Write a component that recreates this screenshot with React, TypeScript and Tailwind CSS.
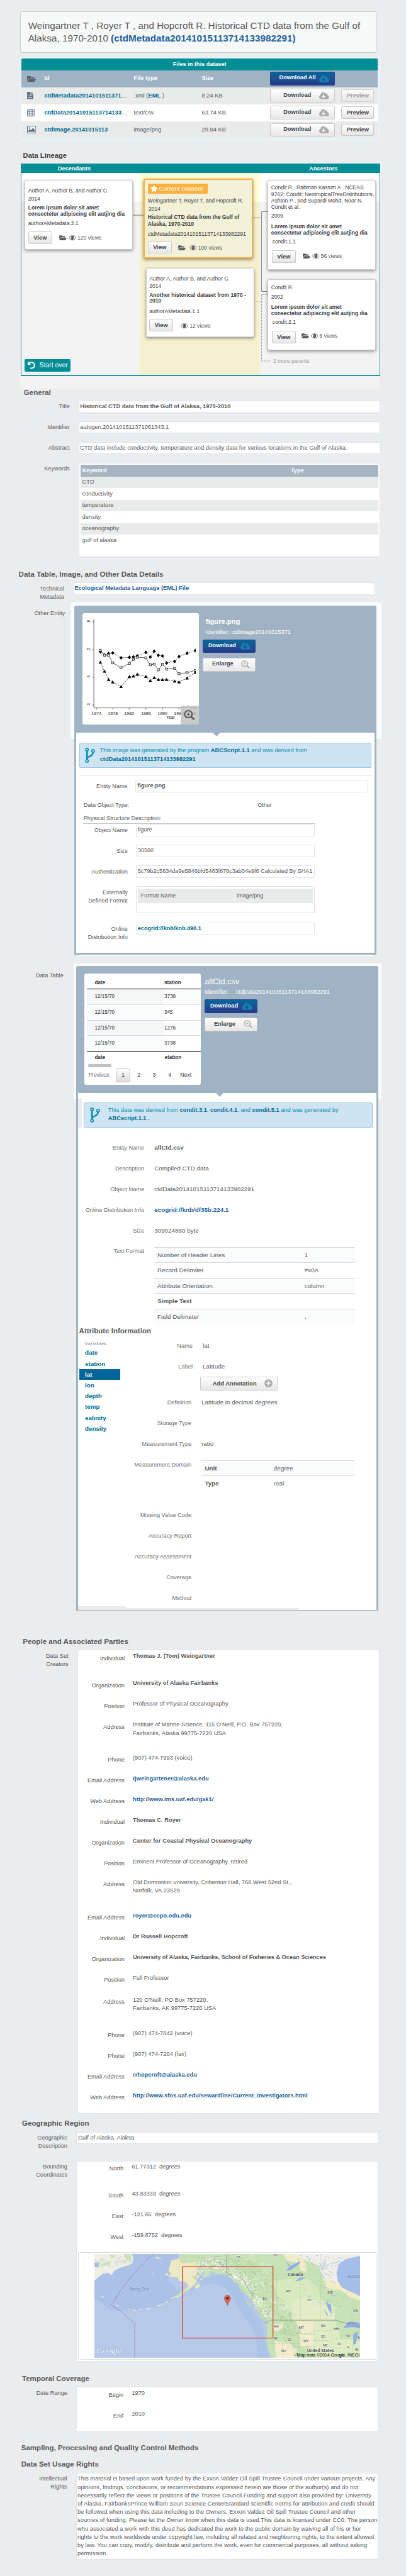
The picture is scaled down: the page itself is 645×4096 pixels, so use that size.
import type { ReactNode } from "react";
import { FaCloudDownloadAlt, FaFolderOpen, FaPlusCircle, FaStar } from "react-icons/fa";

/* ---------- icons ---------- */

function FileIcon() {
  return (
    <svg viewBox="0 0 20 22" className="h-[11.5px] w-[10px]" preserveAspectRatio="none">
      <path d="M0 0h11v8h9v14H0z M13 0l7 6h-7z" fill="#667385" />
      <path d="M4 12h12M4 16.5h12" stroke="#e9ebea" strokeWidth="2" />
    </svg>
  );
}

function GridIcon() {
  return (
    <svg viewBox="0 0 24 22" className="h-[11px] w-[12.4px]" preserveAspectRatio="none">
      <rect x="1.2" y="1.2" width="21.6" height="19.6" rx="1.5" fill="none" stroke="#6f7b8d" strokeWidth="2.2" />
      <path d="M1 7.5h22M1 14h22M8.5 1v20M15.8 1v20" stroke="#6f7b8d" strokeWidth="2" />
    </svg>
  );
}

function PictureIcon() {
  return (
    <svg viewBox="0 0 26 22" className="h-[12px] w-[14.4px]" preserveAspectRatio="none">
      <rect x="1" y="1" width="24" height="20" rx="1.5" fill="#f4f6f7" stroke="#667385" strokeWidth="2" />
      <circle cx="7" cy="6.5" r="2.2" fill="#667385" />
      <path d="M4 18v-5l4-3 3 3 6-7 5 6v6z" fill="#667385" />
    </svg>
  );
}

function EyeIcon() {
  return (
    <svg viewBox="0 0 24 16" className="h-[8.4px] w-[11.6px]" preserveAspectRatio="none">
      <path d="M1 8C5-1 19-1 23 8C19 17 5 17 1 8z" fill="none" stroke="#58595b" strokeWidth="1.7" />
      <ellipse cx="12" cy="7.6" rx="5" ry="6" fill="#58595b" />
      <path d="M8.6 8.2c0-2.6 1-4 2.6-4.6" fill="none" stroke="#eee" strokeWidth="1.2" />
    </svg>
  );
}

function ForkIcon() {
  return (
    <svg viewBox="0 0 16 24" className="h-[24px] w-[16px]" fill="none" stroke="#008cb4" preserveAspectRatio="none">
      <circle cx="3.2" cy="3" r="2.1" strokeWidth="1.6" />
      <circle cx="3.2" cy="20.9" r="2.1" strokeWidth="1.6" />
      <circle cx="12.8" cy="4.9" r="2.1" strokeWidth="1.6" />
      <path d="M3.2 5.2v13.4" strokeWidth="2.6" />
      <path d="M3.4 16.6c1-3.6 9.2-1.8 9.4-9.4" strokeWidth="2.4" />
    </svg>
  );
}

function ZoomIcon({ className, color }: { className: string; color: string }) {
  return (
    <svg viewBox="0 0 28 28" className={className} preserveAspectRatio="none" fill="none" stroke={color}>
      <circle cx="11.5" cy="11.5" r="9.6" strokeWidth="3.4" />
      <path d="M18.5 18.5l8 8" strokeWidth="4.6" />
      <path d="M11.5 7v9M7 11.5h9" strokeWidth="2" />
    </svg>
  );
}

function UndoIcon() {
  return (
    <svg viewBox="0 0 16 16" className="h-[13px] w-[13.5px]" fill="none">
      <path d="M4.2 4.2C9 .6 14.4 3.6 14.2 8.6C14 13.4 10 15 6 13.8" stroke="#fff" strokeWidth="2.5" />
      <path d="M1 .6v7h6.4z" fill="#fff" />
    </svg>
  );
}

/* ---------- shared pieces ---------- */

function Button({ children, className = "", disabled = false }: { children: ReactNode; className?: string; disabled?: boolean }) {
  return (
    <button
      className={`flex items-center rounded-[2px] border border-[#c9c9c9] bg-linear-to-b from-white to-[#e6e6e6] font-bold ${
        disabled ? "text-[#8a8a8a] opacity-80" : "text-[#444]"
      } ${className}`}
    >
      {children}
    </button>
  );
}

function BlueButton({ children, className = "" }: { children: ReactNode; className?: string }) {
  return (
    <button
      className={`flex items-center rounded-[2px] border border-[#26428f] bg-linear-to-b from-[#00679a] to-[#233a89] font-bold text-white ${className}`}
    >
      {children}
    </button>
  );
}

function Heading({ children, className = "" }: { children: ReactNode; className?: string }) {
  return <h2 className={`text-[11.55px] leading-[13px] font-bold text-[#58595b] ${className}`}>{children}</h2>;
}

function Link({ children }: { children: ReactNode }) {
  return <a className="font-bold text-[#1f5f9c]">{children}</a>;
}

function Field({
  label,
  labelClass,
  boxClass,
  rowClass = "h-[33px]",
  children,
}: {
  label: ReactNode;
  labelClass: string;
  boxClass: string;
  rowClass?: string;
  children: ReactNode;
}) {
  return (
    <div className={`flex items-start ${rowClass}`}>
      <div className={`shrink-0 pt-[3.2px] text-right leading-[13.2px] ${labelClass}`}>{label}</div>
      <div className={`shrink-0 rounded-[2px] border border-[#dfe3ed] bg-white ${boxClass}`}>{children}</div>
    </div>
  );
}

/* ---------- files table ---------- */

function FilesTable() {
  const rows = [
    { icon: <FileIcon />, id: "ctdMetadata2014101511371", cut: true, type: <>.xml (<b className="text-[#00698f]">EML</b> )</>, size: "8.24 KB", tone: "bg-[#e9ebea]", off: true },
    { icon: <GridIcon />, id: "ctdData20141015113714133", cut: true, type: <>text/csv</>, size: "63.74 KB", tone: "bg-white", off: false },
    { icon: <PictureIcon />, id: "ctdImage.20141015113", cut: false, type: <>image/png</>, size: "29.84 KB", tone: "bg-[#e9ebea]", off: false },
  ];
  return (
    <section className="ml-[32px] h-[134px] w-[571.5px] bg-[#e7f1fa] pt-[3px] pl-[2px]">
      <div className="w-[566.4px] overflow-hidden rounded-[2px]">
        <div className="h-[18.5px] bg-[#008e96] text-center text-[9.15px] leading-[18.5px] font-bold text-white">Files in this dataset</div>
        <div className="flex h-[27.1px] items-center bg-[#a0b3c4] font-bold text-white">
          <div className="w-[36.5px] pl-[8.8px]">
            <FaFolderOpen className="h-[13px] w-[14px] text-[#58646f]" />
          </div>
          <div className="w-[142px]">Id</div>
          <div className="w-[108px]">File type</div>
          <div className="w-[108.8px]">Size</div>
          <BlueButton className="h-[21.6px] w-[103.2px] pb-[2px] pl-[13.2px]">
            <span className="w-[63.6px] text-left">Download All</span>
            <FaCloudDownloadAlt className="mt-[2px] h-[12.6px] w-[15.6px] text-[#1581ab]" />
          </BlueButton>
        </div>
        {rows.map((r) => (
          <div key={r.id} className={`flex h-[27.1px] items-center ${r.tone}`}>
            <div className="w-[36.5px] pl-[8.8px]">{r.icon}</div>
            <div className="w-[142px] text-[9.38px] whitespace-nowrap">
              <b className="text-[#00698f]">{r.id}</b>
              {r.cut ? "…" : ""}
            </div>
            <div className="w-[108px] text-[9.38px]">{r.type}</div>
            <div className="w-[108.8px] text-[9.38px]">{r.size}</div>
            <Button className="h-[21.6px] w-[103.2px] pb-[2px] pl-[20px]">
              <span className="w-[56.8px] text-left">Download</span>
              <FaCloudDownloadAlt className="mt-[2px] h-[12.6px] w-[15.6px] text-[#a9a9a9]" />
            </Button>
            <Button className="ml-[10px] h-[19.6px] w-[51.8px] justify-center" disabled={r.off}>
              Preview
            </Button>
          </div>
        ))}
      </div>
    </section>
  );
}

/* ---------- lineage ---------- */

function Stats({ views, folder, className = "" }: { views: string; folder?: string; className?: string }) {
  return (
    <div className={`flex items-center text-[8.6px] text-[#58595b] ${className}`}>
      {folder && <FaFolderOpen className={`h-[10.4px] w-[12px] ${folder}`} />}
      <EyeIcon />
      <span className="ml-[2.2px]">{views}</span>
    </div>
  );
}

function CardFoot({ views, folder, className, statClass }: { views: string; folder?: string; className: string; statClass: string }) {
  return (
    <div className={`flex items-start ${className}`}>
      <Button className="h-[19.7px] w-[38.2px] justify-center text-[9.4px]">View</Button>
      <Stats views={views} folder={folder} className={statClass} />
    </div>
  );
}

const cardBase = "rounded-[3px] text-[8.57px] leading-[10.3px] text-[#3c3c3e] whitespace-nowrap";
const plainCard = "border border-[#c9cacc] bg-white shadow-[0_2px_5px_rgba(0,0,0,0.4)]";

function Lineage() {
  return (
    <section className="ml-[33px] h-[338.4px] w-[571px] border border-[#1d9aa3] border-b-2 bg-[#f3f3f3]">
      <div className="flex h-[14px] bg-[#008e96] leading-[14px] font-bold text-white">
        <div className="w-[168px] text-center">Decendants</div>
        <div className="w-[224px]" />
        <div className="w-[177px] pl-[65px]">Ancestors</div>
      </div>
      <div className="relative flex h-[321.4px] bg-[linear-gradient(to_bottom,#fff_45.5px,#f3f3f3_45.5px)]">
        <svg className="absolute top-0 left-0 h-[321px] w-[569px]" viewBox="34 275 569 321" fill="none">
          <rect x="221.7" y="275" width="190.9" height="321" fill="#fffcd9" />
          <rect x="221.7" y="320.3" width="190.9" height="276" fill="#f5f0ce" />
          <path d="M211 342.3h18" stroke="#a7a9ac" strokeWidth="2" />
          <path d="M401 346.5h14.5M425 336.5h-9.5v127h9.5" stroke="#8a8c8f" />
          <path d="M403 479.5h12" stroke="#cfcda8" strokeDasharray="2.5 1.5" />
          <path d="M425.5 468.5h-10v105.5h15" stroke="#939598" strokeDasharray="3 2" />
        </svg>

        <div className="relative w-[187.7px] pt-[11.2px] pl-[5.2px]">
          <div className={`h-[110.5px] w-[172px] pt-[10.4px] pl-[4.6px] ${cardBase} ${plainCard}`}>
            <p>Author A, Author B, and Author C.</p>
            <p className="mt-[2.9px]">2014</p>
            <p className="mt-[3.6px] font-bold">
              Lorem ipsum dolor sit amet
              <br />
              consectetur adipiscing elit autjing dia
            </p>
            <p className="mt-[4.7px]">authorAMetadata.2.1</p>
            <CardFoot className="mt-[8.1px]" views="120 views" folder="mr-[3px]" statClass="mt-[5px] ml-[11.2px]" />
          </div>
          <button className="mt-[174.4px] flex h-[19.8px] w-[72.6px] items-center rounded-[2px] bg-[#008e96] pl-[3.5px] text-[10.4px] text-white">
            <UndoIcon />
            <span className="ml-[6.4px]">Start over</span>
          </button>
        </div>

        <div className="relative w-[190.9px] pt-[8.9px] pl-[6.6px]">
          <div className={`h-[127.6px] w-[173.6px] border-[2.5px] border-[#fbb040] bg-[#f3f1d8] pt-[6.2px] pl-[4.5px] shadow-[0_2px_5px_rgba(0,0,0,0.45)] ${cardBase}`}>
            <div className="flex h-[15.7px] w-[95.4px] items-center rounded-[1px] bg-[#fbb040] pl-[4px] text-[9.9px] text-white">
              <FaStar className="h-[12px] w-[11.5px]" />
              <span className="ml-[2.4px]">Current Dataset</span>
            </div>
            <p className="mt-[6.1px]">Weingartner T, Royer T, and Hopcroft R.</p>
            <p className="mt-[2.9px] pl-[1px]">2014</p>
            <p className="mt-[3.1px] leading-[10.6px] font-bold">
              Historical CTD data from the Gulf of
              <br />
              Alaska, 1970-2010
            </p>
            <p className="mt-[5px]">ctdMetadata20141015113714133982291</p>
            <CardFoot className="mt-[6.7px]" views="100 views" folder="mr-[6px]" statClass="mt-[5px] ml-[10px]" />
          </div>
          <div className={`mt-[14.5px] ml-[3.3px] h-[110.3px] w-[172.3px] pt-[10.6px] pl-[4.6px] ${cardBase} ${plainCard}`}>
            <p>Author A, Author B, and Author C.</p>
            <p className="mt-[2.4px]">2014</p>
            <p className="mt-[4px] leading-[9.9px] font-bold">
              Another historical dataset from 1970 -
              <br />
              2010
            </p>
            <p className="mt-[5.9px]">authorAMetadata.1.1</p>
            <CardFoot className="mt-[6.7px]" views="12 views" statClass="mt-[6px] ml-[12px]" />
          </div>
        </div>

        <div className="relative w-[190px] pt-[10.7px] pl-[12.3px]">
          <div className={`h-[143.3px] w-[172px] pt-[6.6px] pl-[4.8px] ${cardBase} ${plainCard}`}>
            <p>
              Condit R , Rahman Kassim A , NCEAS
              <br />
              9762: Condit: NeotropicalTreeDistributions,
              <br />
              Ashton P , and Supardi Mohd. Noor N.
              <br />
              Condit et al.
            </p>
            <p className="mt-[4px]">2009</p>
            <p className="mt-[5.9px] font-bold">
              Lorem ipsum dolor sit amet
              <br />
              consectetur adipiscing elit autjing dia
            </p>
            <p className="mt-[4.2px] pl-[2px]">condit.1.1</p>
            <CardFoot className="mt-[8.3px] ml-[1.2px]" views="56 views" folder="mr-[3px]" statClass="mt-[4px] ml-[10.8px]" />
          </div>
          <div className={`mt-[15.4px] h-[113px] w-[172px] pt-[6.6px] pl-[4.8px] ${cardBase} ${plainCard}`}>
            <p>Condit R</p>
            <p className="mt-[4.3px]">2002</p>
            <p className="mt-[5.8px] leading-[10.1px] font-bold">
              Lorem ipsum dolor sit amet
              <br />
              consectetur adipiscing elit autjing dia
            </p>
            <p className="mt-[4.5px] pl-[2px]">condit.2.1</p>
            <CardFoot className="mt-[8.5px] ml-[1.2px]" views="6 views" folder="mr-[3px]" statClass="mt-[3px] ml-[8.7px]" />
          </div>
          <p className="mt-[11.2px] pl-[9.2px] text-[8.57px] leading-[11px] text-[#9a9a9c]">2 more parents</p>
        </div>
      </div>
    </section>
  );
}

/* ---------- general ---------- */

function General() {
  const keywords = ["CTD", "conductivity", "temperature", "density", "oceanography", "gulf of alaska"];
  const label = "w-[124.6px] pr-[13.9px]";
  return (
    <section className="h-[289px]">
      <Heading className="h-[19.4px] pl-[37.8px]">General</Heading>
      <Field label="Title" labelClass={label} boxClass="h-[19.3px] w-[479.7px] pl-[1.7px] text-[9.28px] leading-[17.3px]">
        <b>Historical CTD data from the Gulf of Alaksa, 1970-2010</b>
      </Field>
      <Field label="Identifier" labelClass={label} boxClass="h-[19.3px] w-[479.7px] pl-[1.7px] text-[9.28px] leading-[17.3px]">
        autogen.2014101511371061343.1
      </Field>
      <Field label="Abstract" labelClass={label} boxClass="h-[19.3px] w-[479.7px] pl-[1.7px] leading-[17.3px] tracking-[0.055px]">
        CTD data include conductivity, temperature and density data for various locations in the Gulf of Alaska.
      </Field>
      <Field label="Keywords" labelClass={label} rowClass="h-[149px]" boxClass="h-[148.8px] w-[479.7px] px-[2px] pt-[2.2px]">
        <div className="flex h-[18.5px] items-center bg-[#a8b3c4] pl-[3px] font-bold text-white">
          <span className="w-[331.3px]">Keyword</span>
          <span>Type</span>
        </div>
        {keywords.map((k) => (
          <div key={k} className="flex h-[18.5px] items-center pl-[3px] odd:bg-white even:bg-[#e9ebea]">
            {k}
          </div>
        ))}
      </Field>
    </section>
  );
}

/* ---------- entity panels ---------- */

const SERIES_X = [28.4, 35, 41.5, 48.1, 61.3, 74.5, 81, 87.2, 100.8, 107.8, 113.9, 120.5, 127.1, 133.7, 146.4, 153.4, 166.2, 179.4];
const DIAMONDS = [61.2, 66.5, 64, 63.2, 70.9, 70.2, 69.6, 68, 62.3, 69.8, 60.5, 66.9, 68, 79.2, 76.8, 69.1, 63.8, 59.6];
const SQUARES = [59, 66.7, 66.7, 79, 86.7, 79.7, 73.5, 70, 71.1, 82.1, 81, 90.2, 81.2, 88.9, 87.8, 96.2, 94.6, 90.9];
const TRIANGLES = [78.1, 92.4, 105.6, 109.6, 116.9, 101, 100.1, 97.3, 100.8, 107.2, 102.6, 105.6, 105.9, 105.6, 108.1, 109.6, 103.2, 94.4];

function line(ys: number[]) {
  return SERIES_X.map((x, i) => `${x},${ys[i]}`).join(" ");
}

function Chart() {
  const years: [number, string][] = [
    [22.2, "1974"],
    [48.2, "1978"],
    [74.2, "1982"],
    [100.8, "1986"],
    [127.1, "1990"],
    [153.2, "1994"],
    [179.4, "1998"],
  ];
  const levels: [number, string][] = [
    [13.7, ".6"],
    [58.1, ".5"],
    [101.7, ".4"],
    [146, ".3"],
  ];
  return (
    <svg viewBox="0 0 185 177.4" className="block h-[177.4px] w-[185px]" fill="none" stroke="#222" strokeWidth="0.7">
      <clipPath id="plot">
        <rect x="0" y="0" width="180" height="177" />
      </clipPath>
      <path d="M18.1 9v141.6h161.7" />
      {levels.map(([y, t]) => (
        <g key={t}>
          <path d={`M15.4 ${y}h2.7`} />
          <text transform={`translate(11.6 ${y + 2.6}) rotate(-90)`} fontSize="6.6" fill="#222" stroke="none">
            {t}
          </text>
        </g>
      ))}
      <g clipPath="url(#plot)">
        {years.map(([x, t]) => (
          <g key={t}>
            <path d={`M${x} 150.6v2.8`} />
            <text x={x} y="161.8" textAnchor="middle" fontSize="7.1" fill="#222" stroke="none">
              {t}
            </text>
          </g>
        ))}
        <polyline points={line(DIAMONDS)} strokeDasharray="1.6 1" />
        <polyline points={line(SQUARES)} />
        <polyline points={line(TRIANGLES)} strokeDasharray="4 1.2" />
        {SERIES_X.map((x, i) => (
          <g key={x} stroke="none" fill="#000">
            <path d={`M${x} ${DIAMONDS[i] - 3}l2.6 3l-2.6 3l-2.6-3z`} />
            <rect x={x - 1.7} y={SQUARES[i] - 1.7} width="3.4" height="3.4" fill="#ddd" stroke="#222" strokeWidth="0.8" />
            <path d={`M${x} ${TRIANGLES[i] - 2.8}l2.8 5h-5.6z`} />
          </g>
        ))}
      </g>
      <text x="139.8" y="168.4" textAnchor="middle" fontSize="6.9" fill="#222" stroke="none">
        Year
      </text>
    </svg>
  );
}

function PanelActions() {
  return (
    <>
      <BlueButton className="h-[21.5px] w-[84px] pb-[2px] pl-[7.6px]">
        <span className="w-[51.4px] text-left">Download</span>
        <FaCloudDownloadAlt className="mt-[2px] h-[12.6px] w-[15.6px] text-[#1581ab]" />
      </BlueButton>
      <Button className="mt-[7.3px] h-[22px] w-[84px] rounded-[1px] pb-[2px] pl-[13.6px]">
        <span className="w-[46.6px] text-left">Enlarge</span>
        <ZoomIcon color="#b0b0b0" className="mt-[1px] h-[13px] w-[14px]" />
      </Button>
    </>
  );
}

function Notch({ className }: { className: string }) {
  return (
    <svg viewBox="0 0 12 6" className={`h-[6px] w-[12px] ${className}`}>
      <path d="M0 0h12L6 6z" fill="#a0b3c4" />
    </svg>
  );
}

function FigurePanel() {
  const inner = "h-[19.5px] w-[284.4px] pl-[1.8px] leading-[17.5px]";
  const label = "w-[94.9px] pr-[13.2px]";
  return (
    <div className="h-[560px] w-[494px] bg-[linear-gradient(to_bottom,#fafcfe_217.3px,transparent_217.3px)] pt-[4.7px] pl-[6px]">
      <div className="flex h-[555.2px] w-[479.3px] flex-col rounded-t-[3px] bg-[#a0b3c4] px-[2.8px] pb-[2.6px]">
        <div className="flex h-[202.7px] shrink-0 pt-[12.2px] pl-[9.6px]">
          <div className="relative h-[177.4px] w-[185px] rounded-[3px] bg-white">
            <Chart />
            <div className="absolute right-0 bottom-0 flex h-[29.7px] w-[28.8px] items-center justify-center rounded-br-[3px] bg-[#bdbdbd]/80">
              <ZoomIcon color="#5a5a5a" className="h-[16px] w-[17.6px]" />
            </div>
          </div>
          <div className="pl-[6.6px] text-white">
            <h3 className="mt-[7px] pl-[4.4px] text-[11.2px] leading-[13px] font-bold">figure.png</h3>
            <p className="mt-[4px] pl-[4.6px] leading-[13.2px]">Identifier: ctdImage20141015371</p>
            <div className="mt-[5px]">
              <PanelActions />
            </div>
          </div>
        </div>
        <div className="flex-1 bg-white">
          <Notch className="ml-[217px]" />
          <div className="mt-[10px] ml-[4.8px] flex h-[40px] w-[463.8px] rounded-[2px] border border-[#97c4e8] bg-[#cee4f2] pt-[6.8px] pl-[8.4px] text-[9.28px] text-[#0a8fb2]">
            <ForkIcon />
            <p className="-mt-[1.6px] ml-[7.4px] leading-[13.2px]">
              This image was generated by the program <b className="text-[#006a98]">ABCScript.1.1</b> and was derived from
              <br />
              <b className="text-[#006a98]">ctdData20141015113714133982291</b>
            </p>
          </div>
          <div className="mt-[12px] ml-[6px] w-[464.8px] border-t border-[#dde2ea]" />
          <div className="mt-[6.2px] text-[9.1px]">
            <Field label="Entity Name" labelClass="w-[94.3px] pr-[12.8px]" rowClass="h-[34px]" boxClass="h-[19.5px] w-[369.6px] pl-[1.8px] leading-[17.5px]">
              <b>figure.png</b>
            </Field>
          </div>
          <div className="flex h-[20.6px] pl-[11.7px] text-[9.08px] leading-[13.2px]">
            <span className="w-[276.4px]">Data Object Type:</span>
            <span>Other</span>
          </div>
          <div className="ml-[11.2px] h-[14.6px] w-[369px] border-b border-[#c4c6c9] pl-[0.5px] text-[9.08px] leading-[13.2px]">
            Physical Structure Description:
          </div>
          <div className="mt-[0.8px] text-[9.08px]">
            <Field label="Object Name" labelClass={label} boxClass={inner}>figure</Field>
            <Field label="Size" labelClass={label} boxClass={inner}>30560</Field>
            <Field label="Authentication" labelClass={label} boxClass={inner}>
              <span className="whitespace-nowrap">5c79b2c5634da9e5846bfd5483f878c3ab04e9f6 Calculated By SHA1</span>
            </Field>
            <Field label={<>Externally<br />Defined Format</>} labelClass={label} rowClass="h-[58px]" boxClass="h-[43px] w-[284.4px] px-[2px] pt-[2.2px]">
              <div className="flex h-[23.8px] items-center bg-[#e9ebea] pl-[4.8px]">
                <span className="w-[152.2px]">Format Name</span>
                <span>image/png</span>
              </div>
            </Field>
            <Field label={<>Online<br />Distribution Info</>} labelClass={label} boxClass={inner}>
              <b className="text-[#00698f]">ecogrid://knb/knb.490.1</b>
            </Field>
          </div>
        </div>
      </div>
      <div className="ml-[8.6px] h-[1.8px] w-[465px] bg-white" />
    </div>
  );
}

function DataPreview() {
  const rows: [string, string][] = [
    ["12/15/70", "3738"],
    ["12/15/70", "345"],
    ["12/15/70", "1276"],
    ["12/15/70", "3738"],
  ];
  return (
    <div className="h-[177.2px] w-[185.4px] overflow-hidden rounded-[3px] bg-white pl-[4px] text-[8.15px] text-[#2f2f31]">
      <div className="flex h-[25.2px] items-end border-b border-black pb-[5.4px] pl-[12.8px] leading-[9px] font-bold">
        <span className="w-[110.7px]">date</span>
        <span>station</span>
      </div>
      {rows.map(([d, s], i) => (
        <div
          key={i}
          className={`flex items-center pl-[12.8px] ${i < 3 ? "h-[24.7px] border-b border-[#dcdcdc]" : "h-[24.3px] border-b-[1.5px] border-black"} ${
            i % 2 === 0 ? "bg-[linear-gradient(to_right,#f5f6f6_123px,#fbfcfc_123px)]" : "bg-[linear-gradient(to_right,#fbfcfc_123px,#fff_123px)]"
          }`}
        >
          <span className="w-[110.5px]">{d}</span>
          <span>{s}</span>
        </div>
      ))}
      <div className="flex h-[19px] items-center pl-[12.8px] font-bold">
        <span className="w-[111.2px]">date</span>
        <span>station</span>
      </div>
      <div className="mt-px ml-[2px] h-[5.5px] w-[37.5px] rounded-[2px] bg-[#c1c1c1]" />
      <div className="mt-[2px] flex h-[21.6px] items-center text-[8.6px]">
        <span className="w-[46.8px] pl-[2.8px] text-[#666]">Previous</span>
        <span className="flex h-[21.6px] w-[22.4px] items-center justify-center border border-[#c4c4c4] bg-linear-to-b from-white to-[#dcdcdc]">1</span>
        <span className="w-[24.6px] pl-[11.4px]">2</span>
        <span className="w-[24.6px] pl-[11.2px]">3</span>
        <span className="w-[24.6px] pl-[11.4px]">4</span>
        <span className="pl-[5.8px]">Next</span>
      </div>
    </div>
  );
}

function Plain({ label, labelClass, rowClass = "h-[33px]", children }: { label: ReactNode; labelClass: string; rowClass?: string; children?: ReactNode }) {
  return (
    <div className={`flex items-start leading-[13.2px] ${rowClass}`}>
      <div className={`shrink-0 pt-[0.9px] text-right text-[#6d6e71] ${labelClass}`}>{label}</div>
      <div className="text-[9.85px]">{children}</div>
    </div>
  );
}

function AttributeInfo() {
  const vars = ["date", "station", "lat", "lon", "depth", "temp", "salinity", "density"];
  const label = "w-[112.2px] pr-[15.9px]";
  return (
    <>
      <h3 className="mt-[4.6px] pl-[1.4px] text-[11.5px] leading-[13px] font-bold text-[#58595b]">Attribute Information</h3>
      <div className="flex">
        <div className="w-[98px] shrink-0 pl-[1.4px]">
          <div className="mt-[7.6px] pl-[9.2px] font-['Open_Sans',sans-serif] text-[8px] leading-[12px] text-[#808285]">Variables</div>
          <ul className="mt-[0.4px]">
            {vars.map((v) => (
              <li
                key={v}
                className={`h-[17.2px] w-[65.4px] pl-[9.4px] text-[9.82px] leading-[17.2px] font-bold ${
                  v === "lat" ? "bg-[#006699] text-white" : "text-[#00698f]"
                }`}
              >
                {v}
              </li>
            ))}
          </ul>
        </div>
        <div className="pt-[10.2px]">
          <Plain label="Name" labelClass="w-[99.9px] pr-[16.1px]">lat</Plain>
          <Plain label="Label" labelClass="w-[99.9px] pr-[16.1px]" rowClass="h-[24px]">Latitude</Plain>
          <div className="-mt-[0.6px] h-[34px] pl-[96.2px]">
            <Button className="h-[21.6px] w-[123px] pb-[1px] pl-[18.4px] text-[9.4px]">
              <span className="w-[82px] text-left whitespace-nowrap">Add Annotation</span>
              <FaPlusCircle className="h-[13px] w-[13px] text-[#a9a9a9]" />
            </Button>
          </div>
          <div className="-ml-[14.3px]">
            <Plain label="Definition" labelClass={label}>Latitude in decimal degrees</Plain>
            <Plain label="Storage Type" labelClass={label} />
            <Plain label="Measurement Type" labelClass={label}>ratio</Plain>
            <Plain label="Measurement Domain" labelClass={label} rowClass="h-[79.8px]">
              <div className="w-[243px] border-t border-[#d9dadb]">
                <div className="flex h-[23.8px] items-center border-b border-[#d9dadb] bg-[#fafcfb] pl-[5.4px]">
                  <b className="w-[109.4px]">Unit</b>
                  <span>degree</span>
                </div>
                <div className="flex h-[23.8px] items-center pl-[5.4px]">
                  <b className="w-[109.4px]">Type</b>
                  <span>real</span>
                </div>
              </div>
            </Plain>
            <Plain label="Missing Value Code" labelClass={label} />
            <Plain label="Accuracy Report" labelClass={label} />
            <Plain label="Accuracy Assessment" labelClass={label} />
            <Plain label="Coverage" labelClass={label} />
            <Plain label="Method" labelClass={label} rowClass="h-[20px]" />
          </div>
        </div>
      </div>
    </>
  );
}

function TablePanel() {
  const label = "w-[121px] pr-[16.1px]";
  const format: [ReactNode, string][] = [
    ["Number of Header Lines", "1"],
    ["Record Delimiter", "#x0A"],
    ["Attribute Orientation", "column"],
    [<b key="b">Simple Text</b>, ""],
    ["Field Delimeter", ","],
  ];
  return (
    <div className="h-[1029.4px] w-[489px] bg-[linear-gradient(to_bottom,#fafcfe_216px,transparent_216px)] pt-[4px] pl-[4.6px]">
      <div className="flex h-[1025.4px] w-[479.3px] flex-col rounded-t-[3px] bg-[#a0b3c4] px-[2.8px] pb-[2.6px]">
        <div className="flex h-[202.6px] shrink-0 pt-[12.4px] pl-[9.4px]">
          <DataPreview />
          <div className="pl-[6.4px] text-white">
            <h3 className="mt-[7.4px] text-[12.6px] leading-[13px]">allCtd.csv</h3>
            <p className="mt-[2.8px] flex leading-[13.2px]">
              <span className="w-[49.4px]">Identifier:</span>
              <span>ctdData20141015113714133982291</span>
            </p>
            <div className="mt-[5px]">
              <PanelActions />
            </div>
          </div>
        </div>
        <div className="flex flex-1 flex-col bg-white">
          <Notch className="ml-[218.6px] shrink-0" />
          <div className="mt-[3px] h-[46.2px] w-[5.4px] shrink-0 bg-[#ebecee]" />
          <div className="-mt-[40.4px] ml-[9px] flex h-[40px] w-[458.4px] shrink-0 rounded-[2px] border border-[#97c4e8] bg-[#cee4f2] pt-[6.8px] pl-[8.4px] text-[9.28px] text-[#0a8fb2]">
            <ForkIcon />
            <p className="-mt-[1.6px] ml-[13.2px] leading-[13.2px] [&_b]:text-[#006a98]">
              This data was derived from <b>condit.3.1</b>, <b>condit.4.1</b>, and <b>condit.5.1</b> and was generated by
              <br />
              <b>ABCscript.1.1 .</b>
            </p>
          </div>
          <div className="mt-[24.9px]">
            <Plain label="Entity Name" labelClass={label}><b>allCtd.csv</b></Plain>
            <Plain label="Description" labelClass={label}>Compiled CTD data</Plain>
            <Plain label="Object Name" labelClass={label}>ctdData20141015113714133982291</Plain>
            <Plain label="Online Distribution Info" labelClass={label}><Link>ecogrid://knb/df35b.224.1</Link></Plain>
            <Plain label="Size" labelClass={label}>309024860 byte</Plain>
            <div className="flex">
              <div className={`text-right leading-[13.2px] text-[#6d6e71] ${label}`}>Text Format</div>
              <div className="w-[318.6px] text-[9.85px]">
                {format.map(([k, v], i) => (
                  <div key={i} className="flex h-[24.4px] items-center border-t border-[#d9dadb] pl-[4.9px] odd:bg-[#fafcfb]">
                    <span className="w-[233.7px]">{k}</span>
                    <span>{v}</span>
                  </div>
                ))}
              </div>
            </div>
          </div>
          <AttributeInfo />
          <div className="mt-auto flex h-[6.6px] items-end">
            <div className="h-full w-[76.5px] bg-[#ebecee]" />
            <div className="h-[3.6px] w-[276px] bg-[#ebecee]" />
          </div>
        </div>
      </div>
    </div>
  );
}

/* ---------- people ---------- */

function People() {
  const rows: [string, string, ReactNode][] = [
    ["h-[43px]", "Individual", <b>Thomas J. (Tom) Weingartner</b>],
    ["h-[33px]", "Organization", <b>University of Alaska Fairbanks</b>],
    ["h-[33px]", "Position", "Professor of Physical Oceanography"],
    ["h-[52.8px]", "Address", <>Institute of Marine Science, 115 O'Neill, P.O. Box 757220,<br />Fairbanks, Alaska 99775-7220 USA</>],
    ["h-[33px]", "Phone", "(907) 474-7993 (voice)"],
    ["h-[33px]", "Email Address", <Link>tjweingartener@alaska.edu</Link>],
    ["h-[33px]", "Web Address", <Link>http://www.ims.uaf.edu/gak1/</Link>],
    ["h-[33px]", "Individual", <b>Thomas C. Royer</b>],
    ["h-[33px]", "Organization", <b>Center for Coastal Physical Oceanography</b>],
    ["h-[33px]", "Position", "Eminent Professor of Oceanography, retired"],
    ["h-[53px]", "Address", <>Old Domninion university, Crittenton Hall, 768 West 52nd St.,<br />Norfolk, VA 23529</>],
    ["h-[33px]", "Email Address", <Link>royer@ccpo.odu.edu</Link>],
    ["h-[33px]", "Individual", <b>Dr Russell Hopcroft</b>],
    ["h-[33px]", "Organization", <b className="tracking-[-0.04px]">University of Alaska, Fairbanks, School of Fisheries &amp; Ocean Sciences</b>],
    ["h-[35px]", "Position", "Full Professor"],
    ["h-[52.8px]", "Address", <>120 O'Neill, PO Box 757220,<br />Fairbanks, AK 99775-7220 USA</>],
    ["h-[33px]", "Phone", "(907) 474-7842 (voice)"],
    ["h-[33px]", "Phone", "(907) 474-7204 (fax)"],
    ["h-[33px]", "Email Address", <Link>rrhopcroft@alaska.edu</Link>],
    ["h-[33px]", "Web Address", <Link>http://www.sfos.uaf.edu/sewardline/Current_investigators.html</Link>],
  ];
  return (
    <section className="h-[765.9px]">
      <Heading className="mb-[6.6px] pl-[36.2px]">People and Associated Parties</Heading>
      <Field label={<>Data Set<br />Creators</>} labelClass="w-[122.6px] pr-[14px]" rowClass="" boxClass="h-[738px] w-[480px] pt-[2.9px]">
        {rows.map(([h, label, value], i) => (
          <div key={i} className={`flex leading-[13.2px] ${h}`}>
            <div className="w-[74.4px] pt-[3.2px] text-right">{label}</div>
            <div className="pl-[13px] tracking-[0.05px]">{value}</div>
          </div>
        ))}
      </Field>
    </section>
  );
}

/* ---------- map ---------- */

/* Shapes share one survey grid, 1544 x 750 with its origin at (12, 12). */
const gx = (x: number) => (x - 12) * 0.27364;
const gy = (y: number) => (y - 12) * 0.22;

function scatter(seed: number, count: number, path: [number, number][], spread: number) {
  let s = seed;
  const rnd = () => {
    s = (s * 16807) % 2147483647;
    return s / 2147483647;
  };
  return Array.from({ length: count }, () => {
    const t = rnd() * (path.length - 1);
    const i = Math.floor(t);
    const f = t - i;
    const x = path[i][0] + (path[i + 1][0] - path[i][0]) * f + (rnd() - 0.5) * spread;
    const y = path[i][1] + (path[i + 1][1] - path[i][1]) * f + (rnd() - 0.5) * spread * 0.8;
    return `M${x.toFixed(1)} ${y.toFixed(1)}l${(3 + rnd() * 8).toFixed(1)} ${(-6 + rnd() * 14).toFixed(1)}`;
  }).join("");
}

const ROCKIES: [number, number][] = [[800, 60], [900, 130], [960, 220], [1000, 300], [1040, 370], [1100, 430], [1130, 520], [1180, 620]];
const COAST: [number, number][] = [[640, 110], [720, 90], [800, 130], [870, 190], [920, 260], [950, 340], [990, 420], [1030, 470]];
const RANGE: [number, number][] = [[600, 190], [620, 110], [660, 50], [720, 40], [780, 100]];
const SIBERIA: [number, number][] = [[20, 90], [60, 60], [110, 90], [160, 50], [220, 50]];

function LocationMap() {
  const labels: [number, number, string][] = [
    [847, 45, "YT"], [1069, 26, "NT"], [1137, 288, "AB"], [1381, 298, "MB"], [1260, 355, "SK"], [1002, 346, "BC"], [1529, 432, "ON"],
    [1067, 544, "WA"], [1213, 553, "MT"], [1341, 541, "ND"], [1418, 564, "MN"], [1060, 628, "OR"], [1146, 637, "ID"], [1340, 615, "SD"],
    [1486, 612, "WI"], [1550, 627, "M"], [1240, 649, "WY"], [1352, 681, "NE"], [1433, 669, "IA"], [1487, 693, "IL"], [1535, 711, "IN"],
    [1111, 721, "NV"], [1184, 750, "UT"], [1448, 752, "MO"],
  ];
  return (
    <svg viewBox="0 0 422.5 165" className="mx-auto block h-[165px] w-[422.5px]">
      <g transform="scale(0.27364 0.22) translate(-12 -12)">
        <rect x="12" y="12" width="1544" height="750" fill="#b6c9e9" />
        <path d="M12 12H500L440 200L520 300L480 340L300 420L110 420L12 330z" fill="#abc1e8" />
        <path d="M560 280L640 200L760 150L840 210L900 380L980 500L1005 640L1020 762H960L950 600L860 420L780 260L700 220z" fill="#acc3e8" />
        {/* Siberia */}
        <path d="M12 12H230L238 45L232 80L205 95L165 110L130 130L110 165L92 150L60 155L35 180L12 205z" fill="#efefe6" />
        <path d="M180 12H225L230 70L195 50zM100 15l40 8-30 25zM60 80l50-20-10 30-60 10z" fill="#cfe3b9" />
        <path d="M12 75L40 72L36 110L12 105z" fill="#a3bce8" />
        {/* Alaska and mainland */}
        <path d="M510 12L500 45L455 60L458 100L440 130L455 155L440 175L500 180L500 205L545 215L560 245L525 280L470 325L480 330L560 270L610 215L612 180L630 150L655 130L640 185L675 170L690 140L730 155L790 165L825 215L850 225L855 260L890 300L925 345L945 390L965 430L985 455L1010 480L1030 500L1010 510L1015 580L1010 640L1020 700L1040 762H1556V12z" fill="#c7e2b4" />
        <path d="M460 60L500 45L520 80L600 70L615 120L590 190L605 215L560 265L525 285L560 245L545 215L500 205L500 182L445 175L455 155L442 130z" fill="#eee8c3" />
        <path d="M595 250L615 222L628 245L600 265zM420 155l18-5 4 16-16 2z" fill="#eee8c3" />
        {/* prairies */}
        <path d="M1050 210L1130 190L1250 190L1300 250L1330 340L1420 400L1400 490L1240 500L1150 430L1080 340z" fill="#d8eabd" />
        <path d="M1160 360L1240 320L1320 360L1410 440V490H1160z" fill="#e2edc8" />
        <path d="M1190 500H1410L1440 620L1556 640V762H1240L1280 640z" fill="#ddecc2" />
        <path d="M1060 640L1150 660L1190 700L1170 762H1070L1060 700zM1055 520L1110 510L1100 560L1055 580zM1180 500H1290V560L1220 590zM1200 590L1290 600L1280 680L1210 680z" fill="#f3eccb" />
        <path d="M1110 12H1215L1240 90L1245 150L1210 130L1200 80L1130 60z" fill="#f1ecca" />
        {/* tundra and Hudson Bay */}
        <path d="M1180 12H1556V340L1500 310L1460 265L1400 270L1340 200L1320 100L1240 60z" fill="#efefe7" />
        <path d="M1340 180L1420 215L1480 255L1556 320V350L1490 320L1440 270L1360 260z" fill="#f3ecc8" />
        <path d="M1556 25L1470 50L1430 85L1420 150L1425 210L1450 255L1556 318z" fill="#a5bde9" />
        {/* lakes */}
        <path d="M1120 60L1150 100L1210 60L1200 85L1150 130L1120 130L1145 108zM1175 210L1210 180L1240 185L1200 205zM1355 360L1385 380L1390 450L1370 410zM1340 400L1370 455L1362 458zM1455 550L1490 500L1540 505L1556 520V545L1500 540zM1515 590L1545 570L1530 660L1515 668zM1165 670l12 12-6 12z" fill="#8faee4" />
        <path d={scatter(77, 110, [[1240, 40], [1330, 130], [1380, 60], [1310, 230], [1300, 330], [1440, 400], [1500, 470]], 170)} stroke="#9db8e8" strokeWidth="3.5" fill="none" />
        <path d={scatter(19, 60, [[1260, 30], [1380, 60], [1400, 170]], 150)} stroke="#9db8e8" strokeWidth="4" fill="none" />
        {/* relief */}
        <path d={scatter(5, 420, ROCKIES, 130)} stroke="#8fae8a" strokeWidth="2.4" fill="none" opacity="0.75" />
        <path d={scatter(6, 240, [[560, 40], [700, 80], [900, 60], [1000, 150]], 150)} stroke="#9bb394" strokeWidth="2" fill="none" opacity="0.7" />
        <path d={scatter(9, 250, COAST, 60)} stroke="#fbfbf8" strokeWidth="5" fill="none" />
        <path d={scatter(10, 150, COAST, 62)} stroke="#8d948c" strokeWidth="2" fill="none" opacity="0.8" />
        <path d={scatter(12, 110, RANGE, 45)} stroke="#f6f5ee" strokeWidth="5" fill="none" />
        <path d={scatter(13, 100, RANGE, 48)} stroke="#90958e" strokeWidth="2" fill="none" />
        <path d={scatter(14, 80, [[900, 30], [980, 60], [1010, 130], [940, 190], [1000, 250]], 70)} stroke="#f1f0e8" strokeWidth="4" fill="none" />
        <path d={scatter(16, 60, [[1060, 350], [1110, 410], [1100, 440]], 60)} stroke="#f1f0e8" strokeWidth="4" fill="none" />
        <path d={scatter(17, 110, SIBERIA, 75)} stroke="#bfc3b8" strokeWidth="2.4" fill="none" />
        <path d={scatter(21, 100, [[1080, 560], [1150, 600], [1220, 690], [1100, 700]], 100)} stroke="#a9bd95" strokeWidth="2.2" fill="none" opacity="0.8" />
        {/* islands */}
        <path d="M843 225L860 240L885 280L880 300L855 262zM888 345L905 355L918 405L905 385zM955 445L985 455L1020 505L1000 500z" fill="#c2dfb2" stroke="#9fc59a" />
        <path d="M360 30L395 40L400 50L375 45z" fill="#eee8c3" />
        <path d="M205 410l15 3M235 415l20 8M270 415l25-6M310 408l30-4M375 385l20-3M400 378l12-8M425 365l14-8M455 335l22-10M485 325l18-8M505 312l25-16M55 315l12 12M140 380l14 10M345 150l8 3" stroke="#f0eed8" strokeWidth="6" />
        <path d="M810 165L825 200L850 195L845 175z" fill="#fff" />
        {/* borders */}
        <g fill="none" stroke="#74786f" strokeWidth="2.6">
          <path d="M780 12V155L805 160L830 200L855 172L880 205L905 265L935 300L925 335" />
          <path d="M1028 490H1410L1435 500L1480 515L1510 508L1556 550M1005 505L1022 507" />
        </g>
        <g fill="none" stroke="#b3c293" strokeWidth="2.2" strokeDasharray="14 8">
          <path d="M885 163H1418M1070 163V310L1150 430V490M1208 163V490M1325 163V490M1410 490V380L1490 270L1440 230" />
          <path d="M1010 660H1200M1287 500V640M1287 565H1390M1287 637H1380L1410 665M1390 490L1395 625H1460M1220 590H1287M1195 590V680H1290V730M1105 660V762M1410 690H1465M1470 620V690M1510 660V762M1055 570H1110L1150 600" />
        </g>
        <path d="M352 12L300 75L240 155L170 265L110 380L180 440L246 516V762" fill="none" stroke="#94508a" strokeWidth="3" strokeDasharray="10 6" />
        <rect x="523.5" y="103" width="525" height="517" fill="none" stroke="#d94f32" strokeWidth="5.5" />
      </g>
      <path d="M211.3 81.8c-.4-4.4-4.9-7-4.9-11.2a4.9 5 0 0 1 9.8 0c0 4.2-4.5 6.8-4.9 11.2z" fill="#e2664d" stroke="#9c3a2a" strokeWidth="0.6" />
      <circle cx="211.3" cy="70.2" r="2" fill="#4a1611" />
      <g fontFamily="Roboto, sans-serif" fontSize="5.7" textAnchor="middle" fill="#333" stroke="#fff" strokeWidth="1.1" strokeOpacity="0.75" paintOrder="stroke">
        {labels.map(([x, y, t]) => (
          <text key={t} x={gx(x)} y={gy(y)}>
            {t}
          </text>
        ))}
        <g fontWeight="500" fontSize="7.1">
          <text x={gx(1179)} y={gy(169)}>Canada</text>
          <text x={gx(1325)} y={gy(721)}>United States</text>
        </g>
        <g fontStyle="italic" fontSize="6.5" fill="#5374ad" strokeOpacity="0.3">
          <text x={gx(270)} y={gy(276)}>Bering Sea</text>
          <text x={gx(1482)} y={gy(184)} textAnchor="start">Hudson</text>
        </g>
      </g>
      <text x={gx(27)} y={gy(729)} fontFamily="'Liberation Serif', serif" fontSize="13" fill="#fff" stroke="#8ba4cf" strokeWidth="0.8" paintOrder="stroke">
        Google
      </text>
      <text x={gx(1551)} y={gy(754)} textAnchor="end" fontSize="7" fill="#000">
        Map data ©2014 Google, INEGI
      </text>
    </svg>
  );
}

/* ---------- geography, time, rights ---------- */

function Pair({ label, children, className }: { label: string; children: ReactNode; className: string }) {
  return (
    <div className={`flex leading-[13.2px] ${className}`}>
      <div className="w-[73.9px] pt-[3.3px] text-right">{label}</div>
      <div className="pl-[13.2px] whitespace-pre">{children}</div>
    </div>
  );
}

export default function App() {
  return (
    <main className="h-[4096px] w-[645px] overflow-hidden bg-[#ebecee] font-['Liberation_Sans',Arial,sans-serif] text-[9.24px] leading-[13.2px] text-[#58595b]">
      <header className="h-[90px] pt-[18px] pl-[32px]">
        <h1 className="h-[65.6px] w-[566px] rounded-[3px] border border-[#cbcccd] bg-[#f7f9f9] pt-[12.2px] pl-[11.7px] text-[15.25px] leading-[19.8px] whitespace-nowrap">
          Weingartner T , Royer T , and Hopcroft R. Historical CTD data from the Gulf of
          <br />
          Alaksa, 1970-2010 <b className="text-[#1f5f9c]">(ctdMetadata20141015113714133982291)</b>
        </h1>
      </header>

      <FilesTable />
      <h2 className="h-[36px] pt-[17px] pl-[36.6px] text-[11.15px] leading-[13px] font-bold text-[#3f4042]">Data Lineage</h2>
      <Lineage />
      <div className="ml-[32px] h-[19.2px] w-[571px] bg-[#f3f3f3]" />

      <General />

      <section className="h-[1697.3px]">
        <Heading className="mb-[6.8px] pl-[29.6px] tracking-[0.06px]">Data Table, Image, and Other Data Details</Heading>
        <Field
          label={<>Technical<br />Metadata</>}
          labelClass="w-[115.6px] pr-[13.6px]"
          rowClass="h-[31.5px]"
          boxClass="h-[19.3px] w-[480.6px] pl-[1.8px] leading-[17.3px]"
        >
          <Link>Ecological Metadata Language (EML) File</Link>
        </Field>
        <div className="flex h-[573.8px]">
          <div className="w-[112.3px] pt-[10.8px] pr-[9.1px] text-right">Other Entity</div>
          <FigurePanel />
        </div>
        <div className="flex">
          <div className="w-[116.8px] pt-[13.6px] pr-[16px] text-right">Data Table</div>
          <TablePanel />
        </div>
      </section>

      <People />

      <section>
        <Heading className="mb-[6.9px] pl-[35px]">Geographic Region</Heading>
        <Field
          label={<>Geographic<br />Description</>}
          labelClass="w-[121.3px] pr-[14.3px]"
          rowClass="h-[46.3px]"
          boxClass="h-[19px] w-[479.8px] pl-[1.6px] leading-[17px]"
        >
          Gulf of Alaska, Alaksa
        </Field>
        <Field label={<>Bounding<br />Coordinates</>} labelClass="w-[121.3px] pr-[14.3px]" rowClass="h-[339.7px]" boxClass="h-[319.4px] w-[479.8px] pt-[2.2px]">
          <Pair label="North" className="h-[43px]">{"61.77312  degrees"}</Pair>
          <Pair label="South" className="h-[33px]">{"43.83333  degrees"}</Pair>
          <Pair label="East" className="h-[33px]">{"-121.65  degrees"}</Pair>
          <Pair label="West" className="h-[33px]">{"-159.8752  degrees"}</Pair>
          <div className="ml-[2px] h-[171px] w-[473.5px] rounded-[2px] border border-[#d8dadd] pt-[2.2px]">
            <LocationMap />
          </div>
        </Field>
      </section>

      <section className="h-[110px]">
        <Heading className="mb-[6.7px] pl-[35px]">Temporal Coverage</Heading>
        <Field label="Date Range" labelClass="w-[121.3px] pr-[14.3px]" rowClass="h-[72px]" boxClass="h-[72px] w-[479.8px] pt-[2.2px]">
          <Pair label="Begin" className="h-[33px]">1970</Pair>
          <Pair label="End" className="h-[33px]">2010</Pair>
        </Field>
      </section>

      <section>
        <Heading className="h-[26.3px] pl-[33.7px]">Sampling, Processing and Quality Control Methods</Heading>
        <Heading className="mb-[7px] pl-[33.7px]">Data Set Usage Rights</Heading>
        <Field
          label={<>Intellectual<br />Rights</>}
          labelClass="w-[120.5px] pr-[14px]"
          rowClass=""
          boxClass="h-[138.3px] w-[480.1px] pt-[2.4px] pl-[1.6px] leading-[13.2px] tracking-[0.06px] whitespace-nowrap"
        >
          This material is based upon work funded by the Exxon Valdez Oil Spill Trustee Council under various projects. Any
          <br />opinions, findings, conclusions, or recommendations expressed herein are those of the author(s) and do not
          <br />necessarily reflect the views or positions of the Trustee Council.Funding and support also provided by: Univeristy
          <br />of Alaska, FairbanksPrince William Soun Science CenterStandard scientific norms for attribution and credit should
          <br />be followed when using this data including to the Owners, Exxon Valdez Oil Spill Trustee Council and other
          <br />sources of funding. Please let the Owner know when this data is used.This data is licensed under CC0. The person
          <br />who associated a work with this deed has dedicated the work to the public domain by waiving all of his or her
          <br />rights to the work worldwide under copyright law, including all related and neighboring rights, to the extent allowed
          <br />by law. You can copy, modify, distribute and perform the work, even for commercial purposes, all without asking
          <br />permission.
        </Field>
      </section>
    </main>
  );
}
